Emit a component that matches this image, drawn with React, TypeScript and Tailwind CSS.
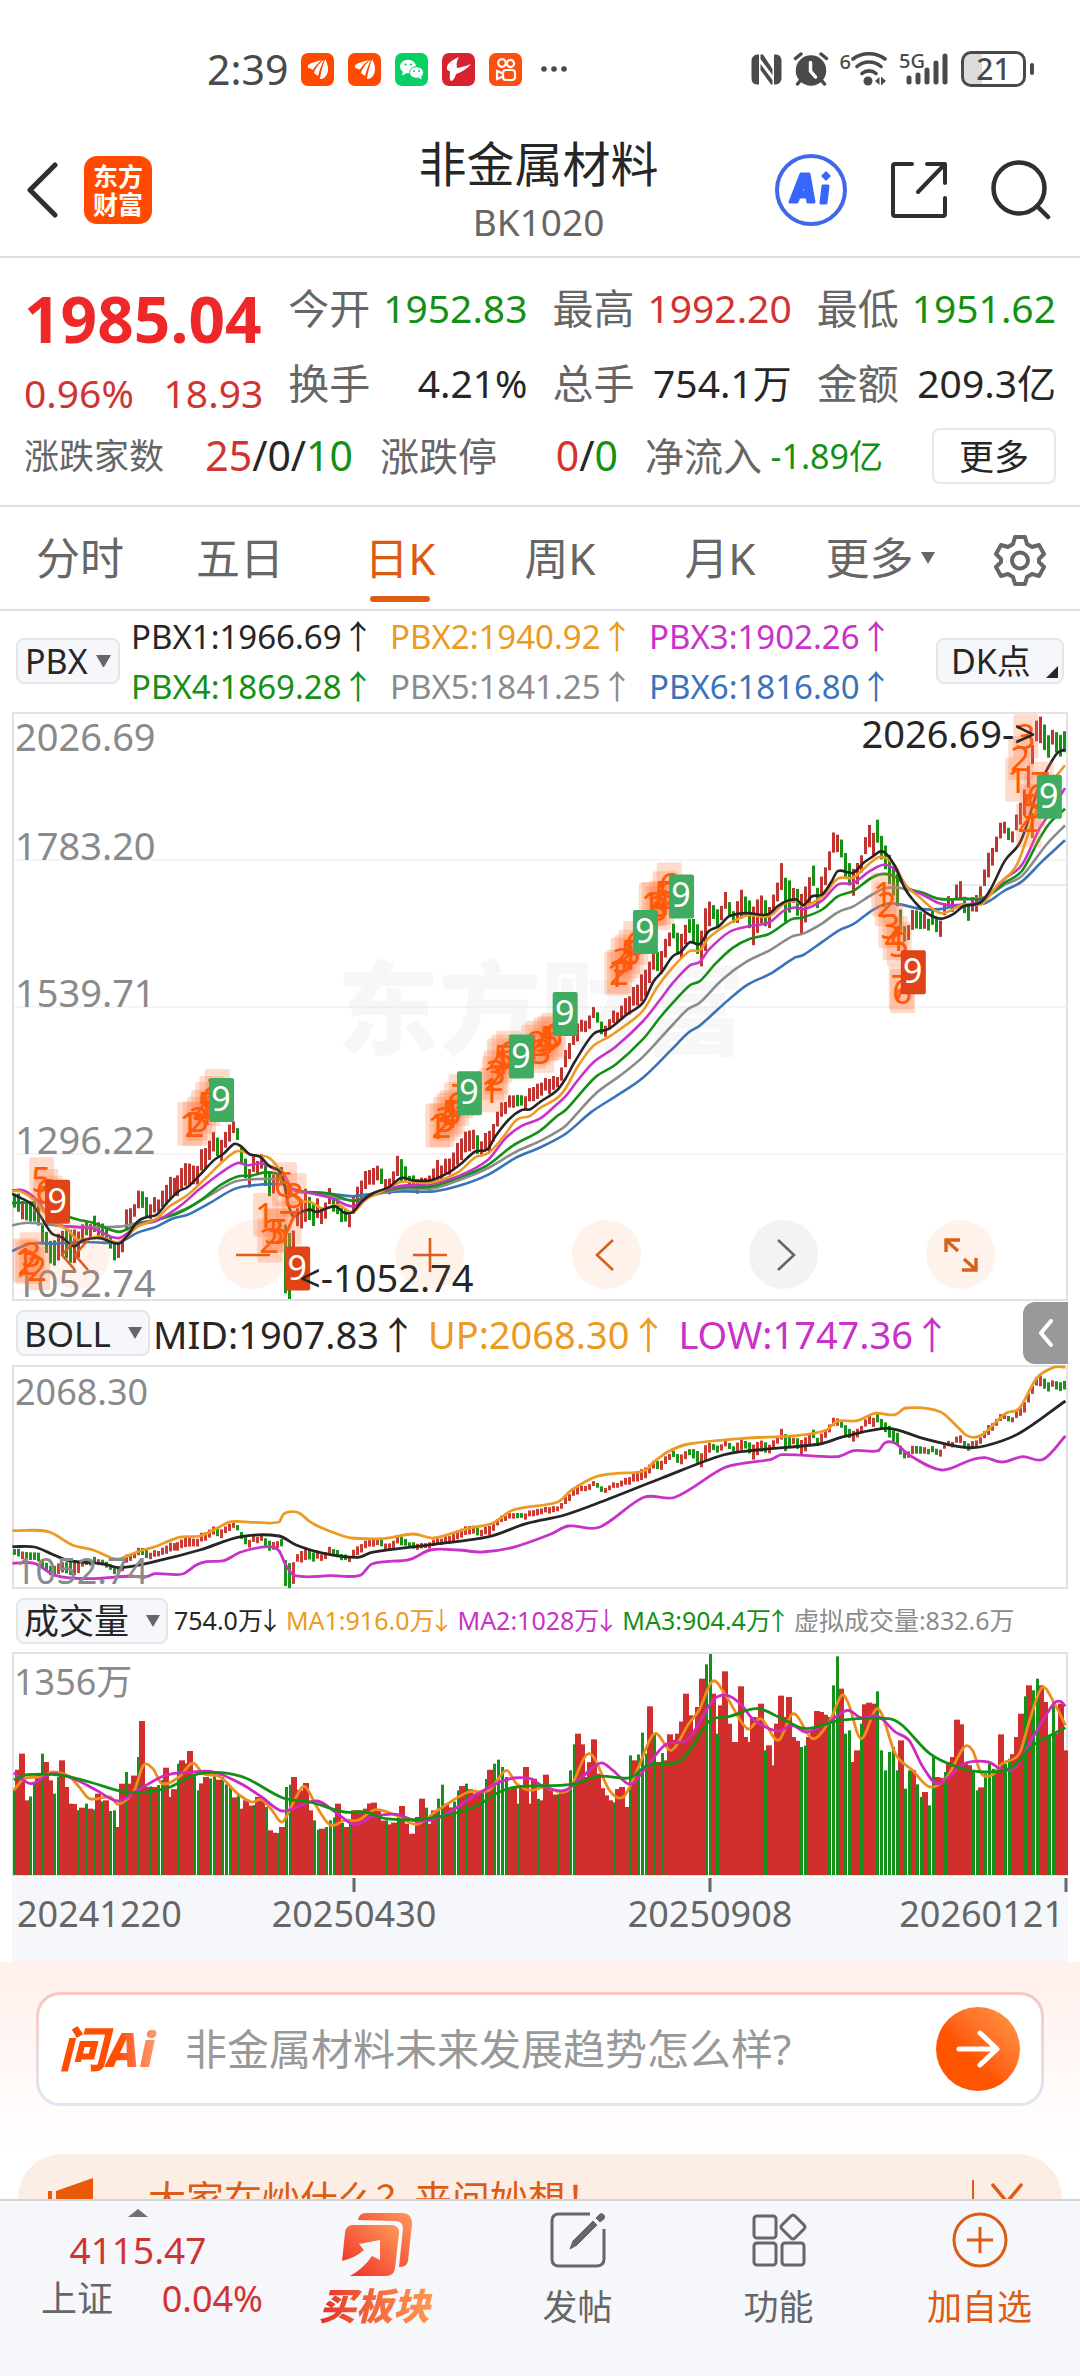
import React from "react";

type Pt = [number, number];

/* ---------- chart helpers ---------- */

const rnd = (i: number) => {
  const v = Math.sin(i * 12.9898 + 4.1) * 43758.5453;
  return v - Math.floor(v);
};

const pairs = (s: string): Pt[] => s.trim().split(/\s+/).map((p) => p.split(",").map(Number) as Pt);

const lerpAt = (list: number[][], x: number, k: number) => {
  if (x <= list[0][0]) return list[0][k];
  for (let i = 1; i < list.length; i++) {
    if (x <= list[i][0]) {
      const a = list[i - 1];
      const b = list[i];
      return a[k] + ((b[k] - a[k]) * (x - a[0])) / (b[0] - a[0]);
    }
  }
  return list[list.length - 1][k];
};

const mx = (x: number) => (x - 35) / 2.904;
const my = (y: number) => (y - 31) / 2.529;
const wx = (x: number) => x / 1.452 - 12;

const curve = (pts: Pt[], fx: (n: number) => number, fy: (n: number) => number) => {
  const p = pts.map(([x, y]) => [fx(x), fy(y)]);
  let d = `M${p[0][0].toFixed(1)} ${p[0][1].toFixed(1)}`;
  for (let i = 0; i < p.length - 1; i++) {
    const a = p[Math.max(0, i - 1)];
    const b = p[i];
    const c = p[i + 1];
    const e = p[Math.min(p.length - 1, i + 2)];
    const step = (c[0] - b[0]) / 3;
    const s1 = i === 0 ? (c[1] - b[1]) / (c[0] - b[0]) : (c[1] - a[1]) / (c[0] - a[0]);
    const s2 = i === p.length - 2 ? (c[1] - b[1]) / (c[0] - b[0]) : (e[1] - b[1]) / (e[0] - b[0]);
    d += `C${(b[0] + step).toFixed(1)} ${(b[1] + s1 * step).toFixed(1)} ${(c[0] - step).toFixed(1)} ${(c[1] - s2 * step).toFixed(1)} ${c[0].toFixed(1)} ${c[1].toFixed(1)}`;
  }
  return d;
};

const RED = "#bf3431";
const GREEN = "#149214";

/* ---------- price data ---------- */

const averages = [
  {
    color: "#3a74b8",
    pts: "35,1397 90,1378 160,1378 250,1374 345,1375 400,1350 455,1335 500,1315 545,1305 610,1275 680,1240 740,1230 815,1228 870,1245 960,1252 1025,1258 1080,1252 1165,1246 1260,1246 1340,1230 1415,1205 1500,1160 1568,1135 1643,1100 1718,1045 1798,1000 1868,958 1953,885 1998,845 2033,826 2098,775 2168,725 2238,695 2308,655 2333,648 2388,615 2438,585 2478,570 2533,535 2578,518 2613,520 2678,532 2731,532 2788,522 2858,518 2918,485 2968,462 3028,410 3093,358",
  },
  {
    color: "#8b8b8b",
    pts: "35,1332 80,1325 200,1335 345,1335 400,1325 455,1318 545,1288 610,1255 680,1222 740,1215 815,1218 850,1240 960,1258 1025,1268 1100,1252 1165,1240 1260,1238 1340,1215 1415,1188 1500,1145 1568,1119 1618,1095 1643,1080 1728,1000 1798,955 1868,905 1953,825 1998,785 2033,768 2098,710 2168,665 2238,635 2298,602 2333,594 2388,568 2433,540 2478,525 2533,495 2568,480 2608,478 2678,492 2731,506 2858,502 2918,470 2968,448 3038,370 3093,320",
  },
  {
    color: "#149014",
    pts: "35,1275 90,1274 130,1275 200,1310 230,1318 270,1325 345,1348 400,1328 455,1318 520,1300 580,1270 640,1230 690,1208 730,1206 770,1198 815,1205 850,1240 960,1252 1025,1270 1080,1254 1165,1236 1250,1234 1320,1215 1415,1180 1490,1130 1568,1093 1618,1055 1643,1040 1728,958 1788,925 1868,860 1918,805 1953,770 2003,725 2033,714 2078,670 2128,630 2178,607 2233,595 2298,558 2333,553 2388,533 2433,500 2478,486 2533,452 2568,443 2603,452 2638,480 2678,490 2731,507 2798,505 2858,505 2918,465 2968,435 3018,355 3048,315 3093,278",
  },
  {
    color: "#c832c8",
    pts: "35,1243 70,1244 110,1270 140,1310 170,1330 220,1336 270,1340 345,1364 400,1332 455,1320 520,1285 580,1240 640,1200 690,1174 720,1180 760,1175 800,1190 820,1195 850,1240 900,1250 960,1262 1025,1284 1060,1262 1100,1248 1165,1232 1250,1228 1330,1208 1415,1168 1470,1110 1515,1080 1568,1062 1618,1025 1643,1005 1678,965 1723,920 1788,880 1868,815 1918,760 1953,720 2003,675 2033,665 2058,635 2118,590 2178,575 2233,566 2278,535 2313,528 2333,533 2388,510 2433,470 2478,466 2528,435 2568,420 2603,435 2638,480 2678,495 2731,518 2778,522 2853,510 2918,455 2968,420 3018,330 3048,290 3093,226",
  },
  {
    color: "#ec9a22",
    pts: "35,1245 60,1246 100,1268 130,1300 160,1325 200,1345 225,1368 290,1360 345,1374 400,1335 455,1315 490,1285 545,1255 600,1210 650,1168 685,1145 710,1146 740,1156 780,1160 815,1195 840,1240 870,1270 900,1272 940,1290 980,1280 1025,1298 1060,1268 1100,1250 1165,1222 1250,1224 1330,1198 1380,1160 1420,1148 1460,1110 1500,1065 1540,1055 1568,1035 1618,1010 1643,985 1678,930 1723,878 1768,855 1818,825 1868,788 1908,730 1953,680 2003,638 2033,636 2058,605 2108,574 2168,548 2233,550 2278,518 2313,512 2333,524 2388,500 2433,455 2478,452 2528,415 2558,400 2598,420 2628,470 2668,500 2731,542 2798,520 2853,518 2898,470 2953,420 2998,310 3028,240 3068,195 3093,168",
  },
  {
    color: "#262626",
    pts: "35,1252 60,1262 95,1280 120,1312 150,1352 180,1362 215,1385 240,1370 290,1364 345,1378 370,1358 400,1322 430,1310 455,1305 490,1270 520,1245 545,1235 580,1205 620,1168 650,1150 680,1126 700,1132 725,1152 755,1158 780,1180 820,1205 835,1270 850,1308 862,1305 880,1296 900,1292 920,1298 945,1290 975,1284 1000,1300 1025,1298 1050,1272 1085,1250 1130,1235 1165,1212 1200,1218 1250,1218 1300,1200 1340,1175 1380,1145 1415,1140 1440,1105 1480,1062 1515,1040 1540,1038 1568,1020 1618,990 1643,960 1668,920 1723,848 1768,835 1818,800 1868,768 1898,715 1923,690 1953,652 1978,640 2003,616 2033,620 2058,588 2088,575 2118,550 2168,542 2228,546 2258,525 2283,512 2313,508 2333,522 2358,500 2388,495 2413,465 2433,436 2478,440 2508,415 2533,400 2558,386 2578,396 2603,430 2628,480 2658,515 2688,540 2731,556 2768,545 2798,525 2848,515 2878,480 2918,410 2958,370 2978,330 3018,220 3068,140 3093,128",
  },
];

const ranges = `38,1250,1295 60,1260,1310 85,1275,1320 110,1290,1345 130,1345,1400 155,1370,1445 180,1345,1415 215,1350,1440 240,1330,1370 270,1320,1360 300,1335,1375 325,1365,1410 350,1380,1420 362,1300,1350 385,1285,1325 402,1237,1285 425,1270,1320 455,1268,1310 485,1210,1265 520,1195,1250 545,1180,1240 575,1170,1220 600,1120,1180 630,1095,1150 645,1110,1165 665,1085,1130 680,1072,1100 700,1115,1160 720,1190,1245 740,1160,1200 765,1150,1195 780,1200,1270 800,1195,1240 818,1180,1230 828,1330,1510 851,1360,1520 863,1290,1340 880,1240,1335 905,1270,1330 935,1275,1320 960,1245,1290 985,1270,1310 1015,1300,1340 1038,1230,1290 1065,1200,1240 1095,1175,1220 1125,1210,1250 1163,1152,1215 1180,1195,1240 1210,1215,1250 1250,1205,1240 1270,1180,1230 1300,1160,1200 1335,1120,1180 1370,1090,1145 1400,1115,1160 1425,1085,1145 1445,1035,1075 1490,990,1030 1520,1010,1045 1555,980,1020 1583,960,1000 1618,955,985 1648,880,930 1673,825,870 1698,815,850 1723,780,810 1753,820,855 1778,800,830 1808,765,810 1838,740,790 1868,690,765 1893,640,690 1918,630,690 1948,570,610 1973,600,670 1998,560,600 2033,580,675 2050,520,640 2063,505,545 2083,540,590 2103,495,535 2128,530,570 2153,480,560 2165,520,560 2186,525,630 2208,510,580 2233,530,590 2258,450,500 2268,410,490 2280,465,585 2303,475,510 2326,490,600 2358,420,480 2373,480,535 2398,415,460 2420,345,400 2438,355,400 2458,405,470 2478,440,510 2503,390,430 2523,310,370 2536,340,400 2548,300,370 2558,345,400 2580,400,480 2603,450,530 2616,545,610 2630,590,630 2648,540,590 2678,545,590 2708,540,580 2731,560,612 2743,515,550 2768,510,540 2783,465,510 2813,510,560 2843,490,530 2868,400,460 2908,300,340 2943,325,360 2973,230,300 2998,130,180 3013,40,100 3024,36,110 3046,100,160 3060,70,115 3080,90,150 3093,95,150`
  .split(" ")
  .map((p) => p.split(",").map(Number));

const COUNT = 264;
const candles = Array.from({ length: COUNT }, (_, i) => {
  const x = 40 + i * 11.6;
  const off = (rnd(i) - 0.5) * 22;
  const hi = Math.max(36, lerpAt(ranges, x, 1) + off + rnd(i + 500) * 10 - 4);
  const lo = Math.min(1522, Math.max(hi + 26, lerpAt(ranges, x, 2) + off - rnd(i + 900) * 8));
  const slope = lerpAt(ranges, x + 11, 1) - lerpAt(ranges, x - 11, 1);
  return { x, hi, lo, up: rnd(i + 77) * 60 - 30 + slope * 1.4 < 6 };
});

type Mark = [number, number, string];
const turns: Mark[] = [
  [120, 1215, "5"], [132, 1245, "6"], [145, 1262, "7"],
  [72, 1420, "1"], [80, 1425, "2"], [92, 1405, "3"], [108, 1440, "2"],
  [550, 1075, "1"], [565, 1075, "2"], [578, 1062, "3"], [590, 1045, "4"], [602, 1025, "5"], [614, 1010, "6"], [630, 992, "7"],
  [770, 1305, "1"], [782, 1370, "2"], [797, 1345, "3"], [810, 1345, "5"], [838, 1325, "7"], [825, 1228, "6"], [853, 1255, "8"],
  [1270, 1080, "1"], [1282, 1078, "2"], [1293, 1062, "3"], [1303, 1052, "4"], [1312, 1045, "5"], [1325, 1025, "6"], [1338, 1005, "7"],
  [1426, 990, "1"], [1434, 960, "2"], [1440, 945, "3"], [1450, 915, "4"], [1462, 905, "5"], [1476, 895, "6"],
  [1548, 880, "1"], [1560, 870, "2"], [1572, 890, "3"], [1584, 862, "4"], [1596, 858, "5"], [1606, 850, "6"],
  [1790, 695, "1"], [1798, 690, "2"], [1808, 660, "3"], [1820, 652, "4"], [1832, 640, "5"], [1845, 618, "6"],
  [1890, 520, "1"], [1900, 520, "2"], [1910, 530, "3"], [1920, 515, "4"], [1930, 492, "5"], [1942, 470, "6"],
  [2565, 495, "1"], [2575, 520, "2"], [2586, 575, "3"], [2598, 605, "4"], [2610, 620, "5"], [2616, 730, "7"], [2620, 740, "6"],
  [2954, 205, "1"], [2963, 150, "2"], [2978, 95, "3"], [2986, 320, "4"], [2998, 272, "5"], [3010, 245, "6"], [3022, 215, "7"],
];
const nines: [number, number, string][] = [
  [166, 1272, "#e04416"], [642, 1015, "#40ac62"], [863, 1441, "#e04416"], [1362, 998, "#40ac62"], [1513, 905, "#40ac62"],
  [1640, 797, "#40ac62"], [1873, 590, "#40ac62"], [1978, 500, "#40ac62"], [2651, 692, "#e04416"], [3046, 248, "#40ac62"],
];

const FONT = "'Noto Sans','Noto Sans CJK SC',sans-serif";

function PriceChart() {
  return (
    <svg viewBox="0 0 1056 590" className="block w-full" role="img" aria-label="日K" fontFamily={FONT}>
      <text x="325" y="336" fontSize="102" fontWeight="900" fill="#f7f7f7" fontFamily="'Noto Sans CJK SC',sans-serif">
        东方财富
      </text>
      {[149, 296, 443].map((y) => (
        <line key={y} x1="0" x2="1056" y1={y} y2={y} stroke="#d8d8d8" strokeDasharray="1 1" />
      ))}
      <line x1="940" x2="1056" y1="174" y2="174" stroke="#d8d8d8" />
      <rect x="1" y="2" width="1054" height="587" fill="none" stroke="#e2e2e2" strokeWidth="2" />
      <g fontSize="38" fill="#8a8a8a">
        <text x="3" y="40">2026.69</text>
        <text x="3" y="149">1783.20</text>
        <text x="3" y="296">1539.71</text>
        <text x="3" y="443">1296.22</text>
        <text x="3" y="586">1052.74</text>
      </g>
      {candles.map((c, i) => (
        <rect key={i} x={Math.round(mx(c.x)) - 1} y={my(c.hi)} width="3" height={(c.lo - c.hi) / 2.529} fill={c.up ? RED : GREEN} />
      ))}
      {averages.map((a) => (
        <path key={a.color} d={curve(pairs(a.pts), mx, my)} fill="none" stroke={a.color} strokeWidth="2.6" strokeLinejoin="round" />
      ))}
      {turns.map(([x, y], i) => (
        <rect key={i} x={mx(x) - 12} y={my(y) - 22} width="25" height="44" rx="2" fill="#ff7a40" fillOpacity="0.27" />
      ))}
      <g fontSize="35" fill="#ff5a0a" textAnchor="middle">
        {turns.map(([x, y, d], i) => (
          <text key={i} x={mx(x)} y={my(y) + 13}>{d}</text>
        ))}
      </g>
      {nines.map(([x, y, c], i) => (
        <g key={i}>
          <rect x={mx(x) - 12} y={my(y) - 22} width="25" height="44" rx="2" fill={c} />
          <text x={mx(x)} y={my(y) + 11} fontSize="34" fill="#fff" textAnchor="middle">9</text>
        </g>
      ))}
      <g fontSize="38" fill="#262626">
        <text x="287" y="581">&lt;-1052.74</text>
        <text x="1024" y="37" textAnchor="end">2026.69-&gt;</text>
      </g>
    </svg>
  );
}

const bands = [
  { color: "#ec9a22", pts: "18,722 70,725 105,765 135,780 165,806 175,806 200,785 225,770 260,742 290,738 315,715 335,695 370,697 405,696 412,672 425,665 435,670 450,695 465,712 490,732 510,744 560,745 600,732 630,744 680,715 715,700 745,660 810,636 830,600 865,560 895,550 935,543 950,515 970,485 1000,462 1080,445 1160,436 1200,420 1215,394 1245,392 1270,370 1300,374 1315,354 1365,365 1390,410 1405,438 1425,436 1460,370 1480,355 1505,265 1530,232 1547,231" },
  { color: "#c832c8", pts: "18,820 50,820 80,856 130,866 190,858 210,862 225,851 265,852 285,825 300,815 325,812 350,786 390,770 405,782 415,825 428,857 480,857 523,856 540,822 595,808 625,780 665,780 700,786 745,772 800,732 825,708 870,712 935,622 980,622 1050,535 1085,518 1120,508 1135,494 1215,500 1240,482 1275,482 1285,458 1300,460 1320,495 1367,540 1410,510 1430,503 1455,516 1485,500 1515,508 1547,438" },
  { color: "#262626", pts: "18,770 50,771 75,792 100,812 150,822 175,833 230,812 290,780 350,740 405,738 430,765 470,790 520,802 540,787 630,763 710,740 765,700 820,675 880,630 960,565 1050,495 1100,480 1190,462 1225,440 1290,415 1340,445 1400,472 1430,468 1480,430 1547,333" },
];

const bandY = (y: number) => (y - 228) / 3 + 1;
const priceToBand = (y: number) => bandY(228 + (2068.3 - (2026.69 - (y - 35) * 0.655)) * 0.6578);

function BollChart() {
  return (
    <svg viewBox="0 0 1056 224" className="block w-full" role="img" aria-label="BOLL" fontFamily={FONT}>
      <rect x="1" y="1" width="1054" height="222" fill="none" stroke="#e2e2e2" strokeWidth="2" />
      {candles.map((c, i) => (
        <rect key={i} x={Math.round(mx(c.x)) - 1} y={priceToBand(c.hi) - 1} width="3" height={priceToBand(c.lo) - priceToBand(c.hi) + 1} fill={c.up ? "#cc3c36" : "#1a941a"} />
      ))}
      {bands.map((b) => (
        <path key={b.color} d={curve(pairs(b.pts), wx, bandY)} fill="none" stroke={b.color} strokeWidth="2.8" strokeLinejoin="round" />
      ))}
      <g fontSize="36" fill="#8a8a8a">
        <text x="3" y="40">2068.30</text>
        <text x="3" y="219">1052.74</text>
      </g>
    </svg>
  );
}

const volumeTops = pairs(
  "20,600 30,490 40,630 50,575 60,490 66,515 72,570 80,610 90,510 98,590 105,640 125,640 132,655 145,610 157,630 165,660 170,710 175,580 182,545 190,580 200,500 206,392 211,590 225,590 240,532 250,620 257,520 266,510 275,482 288,600 300,560 310,545 320,560 335,590 345,615 350,655 358,630 378,625 385,650 395,720 410,710 418,590 426,560 436,600 444,578 450,660 456,690 462,718 470,715 480,690 490,640 500,710 515,660 530,655 543,637 560,690 575,680 583,647 590,700 600,730 606,680 612,625 618,652 624,700 635,625 641,583 650,640 670,587 678,580 690,610 700,600 706,566 715,520 722,508 728,530 735,560 745,590 752,640 763,530 769,640 775,565 785,630 792,553 800,600 820,600 827,540 832,462 838,430 845,462 852,560 862,447 870,550 878,615 885,630 900,590 908,650 914,495 922,510 931,427 937,490 943,348 950,430 956,515 962,488 968,510 972,432 985,430 995,310 1001,375 1007,420 1013,350 1018,265 1024,222 1030,190 1036,310 1042,430 1048,345 1053,243 1060,400 1066,455 1072,455 1076,288 1082,440 1088,455 1095,380 1105,340 1111,480 1117,465 1124,525 1130,400 1135,316 1141,380 1147,320 1153,440 1163,470 1175,440 1188,362 1194,365 1203,380 1209,285 1215,198 1222,295 1228,430 1234,420 1239,515 1245,480 1250,400 1256,342 1268,340 1274,303 1280,480 1286,540 1291,485 1297,470 1304,540 1309,450 1315,595 1321,540 1327,540 1337,620 1344,605 1350,645 1354,497 1362,560 1372,545 1378,515 1383,500 1390,388 1397,402 1402,520 1412,540 1420,600 1430,550 1437,520 1448,540 1454,432 1460,520 1468,505 1476,440 1482,370 1488,318 1495,285 1500,300 1506,265 1512,285 1518,335 1524,435 1530,335 1536,430 1541,340 1547,480",
);
const volumeLines = [
  { color: "#ec8e1c", pts: "20,600 35,565 60,560 75,545 100,558 115,590 130,625 160,620 172,642 195,600 208,525 222,535 235,580 260,560 280,518 295,550 320,560 345,610 365,635 380,628 395,660 410,695 425,640 442,588 460,650 480,705 500,690 520,690 545,658 575,675 605,702 635,660 680,605 710,600 735,540 750,580 770,600 790,590 825,600 850,497 862,500 885,600 905,620 925,540 950,430 975,480 1000,400 1015,360 1035,272 1055,320 1085,415 1105,385 1130,450 1152,370 1180,445 1205,390 1222,315 1232,340 1250,445 1275,355 1300,490 1325,540 1350,590 1375,560 1400,470 1412,480 1425,550 1440,555 1455,520 1480,490 1495,390 1513,292 1530,335 1547,405" },
  { color: "#d028c0", pts: "20,548 45,580 75,550 110,568 140,600 172,632 200,600 240,555 280,545 310,545 350,580 380,620 410,662 460,632 490,670 515,703 540,680 575,672 605,692 640,680 690,615 735,568 770,565 790,590 820,600 845,560 872,518 890,540 915,582 935,540 965,465 1000,445 1035,330 1055,315 1075,340 1095,390 1130,422 1150,405 1170,425 1200,400 1230,360 1250,382 1275,378 1300,425 1320,450 1340,530 1362,580 1400,520 1435,515 1455,538 1475,530 1500,440 1530,340 1540,333 1547,348" },
  { color: "#149014", pts: "20,568 40,553 90,555 130,575 185,606 240,595 290,550 350,558 410,622 450,635 500,665 530,665 560,685 620,685 690,650 720,610 750,590 830,582 870,558 915,562 940,525 985,515 1005,470 1030,392 1060,378 1100,355 1140,390 1170,415 1220,390 1290,385 1310,405 1350,490 1390,530 1430,545 1470,530 1500,465 1547,412" },
];
const volY = (y: number) => (y - 188) / 3 + 1;

const bars = Array.from({ length: COUNT }, (_, i) => {
  const x = 21 + i * 5.8;
  const near = volumeTops.filter((p) => Math.abs(p[0] - x) <= 2.9).map((p) => p[1]);
  const top = near.length ? Math.min(...near) : lerpAt(volumeTops, x, 1) + rnd(i + 300) * 30 - 6;
  return { x: Math.round(wx(x)), y: Math.max(2, volY(top)), up: rnd(i + 41) < (x > 1280 && x < 1345 ? 0.25 : 0.62) };
});

function VolumeChart() {
  return (
    <svg viewBox="0 0 1056 224" className="block w-full" role="img" aria-label="成交量" fontFamily={FONT}>
      <rect x="1" y="1" width="1054" height="222" fill="none" stroke="#e2e2e2" strokeWidth="2" />
      {bars.map((b, i) => b.up && <rect key={i} x={b.x - 3} y={b.y} width="6" height={223 - b.y} fill="#d02f2d" />)}
      {bars.map((b, i) => !b.up && <rect key={i} x={b.x - 1} y={b.y} width="3" height={223 - b.y} fill="#16901a" />)}
      {volumeLines.map((b) => (
        <path key={b.color} d={curve(pairs(b.pts), wx, volY)} fill="none" stroke={b.color} strokeWidth="2.8" strokeLinejoin="round" />
      ))}
      <text x="2" y="43" fontSize="36" fill="#8a8a8a">1356万</text>
    </svg>
  );
}

/* ---------- status bar ---------- */

const Feather = () => (
  <svg viewBox="0 0 33 33" className="size-[33px]">
    <rect width="33" height="33" rx="7" fill="#ff4a00" />
    <g fill="#fff">
      <path d="M7 12C12 9 17 8 22 7C17 10 14 13 12 17C11 16 9 15 7 15Z" />
      <path d="M13 20C15 14 19 9 24 6C21 12 18 18 17 23C16 22 14 21 13 20Z" />
      <path d="M19 26C20 18 22 12 24 6C27 11 28 17 26 21C25 24 22 26 19 26Z" />
    </g>
    <path d="M12 17.5C15 12 19 8.500 24 6M18 24C19 17 21 11 24 6" stroke="#ff4a00" fill="none" />
  </svg>
);

function StatusBar() {
  return (
    <div className="flex h-[92px] items-end pr-[46px] pl-[207px] text-[#4a4a4a]">
      <div className="flex h-[46px] flex-1 items-center gap-[14px]">
        <span className="w-20 text-[41px] leading-none whitespace-nowrap">2:39</span>
        <Feather />
        <Feather />
        <svg viewBox="0 0 33 33" className="size-[33px]">
          <rect width="33" height="33" rx="7" fill="#08d065" />
          <g fill="#fff">
            <ellipse cx="13" cy="13.500" rx="8" ry="6.800" />
            <path d="M8 18L7 22.500L12 20Z" />
            <ellipse cx="21.500" cy="19.500" rx="7" ry="5.800" stroke="#08d065" />
            <path d="M23 24L26.500 26.500L26 22Z" />
          </g>
          <g fill="#08d065">
            <circle cx="10.500" cy="11.500" r="1.100" />
            <circle cx="16" cy="11.500" r="1.100" />
            <circle cx="19" cy="18" r="1" />
            <circle cx="24" cy="18" r="1" />
          </g>
        </svg>
        <svg viewBox="0 0 33 33" className="size-[33px]">
          <rect width="33" height="33" rx="7" fill="#d8232f" />
          <path d="M17 4C8 8 4 12 5 16C5.500 18 8 17.500 8 19C8 23 7 26 9 28C11 28 13 25 14 21C20 19 26 15 29 11C24 13 19 14.500 15 15C14 11 15 7 17 4Z" fill="#fff" />
        </svg>
        <svg viewBox="0 0 33 33" className="size-[33px]">
          <rect width="33" height="33" rx="7" fill="#fb500f" />
          <g fill="none" stroke="#fff" strokeWidth="2.200">
            <circle cx="13" cy="10" r="3.800" />
            <circle cx="21.500" cy="10.500" r="3.600" />
            <rect x="14" y="17" width="12" height="10" rx="3" />
            <path d="M14 20.500L8 18V26L14 23.500" />
          </g>
        </svg>
        <svg viewBox="0 0 28 8" className="ml-1 w-7">
          <g fill="#4a4a4a">
            <circle cx="4" cy="4" r="2.800" />
            <circle cx="14" cy="4" r="2.800" />
            <circle cx="24" cy="4" r="2.800" />
          </g>
        </svg>
      </div>
      <div className="flex h-[46px] items-center gap-[11px]">
        <svg viewBox="0 0 31 33" className="w-[31px]" fill="#4a4a4a">
          <path d="M8 1.500H6Q0.500 2.500 0.500 8V25Q0.500 31 6 31.500H8Z" />
          <path d="M23 31.500H25Q30.500 30.500 30.500 25V8Q30.500 2 25 1.500H23Z" />
          <path d="M9.500 1.500H12L21.500 16V22L9.500 6Z" />
          <path d="M9.500 11L21.500 27V31.500H20L9.500 17Z" />
        </svg>
        <svg viewBox="0 0 36 34" className="w-9" fill="none" stroke="#4a4a4a" strokeWidth="3.500" strokeLinecap="round">
          <circle cx="18" cy="18.500" r="13.500" fill="#4a4a4a" />
          <path d="M2.500 6.500L8 2M33.500 6.500L28 2M7 29L4.500 32M29 29L31.500 32" />
          <path d="M17.500 10.500V19L22.500 25" stroke="#fff" />
        </svg>
        <div className="flex">
          <span className="text-xl leading-5 font-medium">6</span>
          <svg viewBox="0 0 37 34" className="w-[37px]" fill="none" stroke="#4a4a4a" strokeWidth="3.600" strokeLinecap="round">
            <path d="M2 7C11 0 25 0 34 7M6 14.500C13 8.500 23 8.500 30 14.500M11 21.500C15 18 21 18 25 21.500" />
            <circle cx="17" cy="29" r="4.500" fill="#4a4a4a" stroke="none" />
            <path d="M24 29L28.500 25V33ZM30 24.500V33.500L35 29Z" fill="#4a4a4a" stroke="none" />
          </svg>
        </div>
        <div className="relative mr-[1px] w-[50px]">
          <svg viewBox="0 0 50 34" className="w-full" stroke="#4a4a4a" strokeWidth="5" strokeLinecap="round">
            <path d="M10 26V30M19 23V30M28 18V30M37 11V30M46 4V30" />
          </svg>
          <span className="absolute -top-[3px] left-0 text-xl leading-6 font-medium">5G</span>
        </div>
        <div className="flex items-center">
          <div className="flex h-9 w-[65px] items-center justify-center rounded-[10px] border-[3px] border-[#4a4a4a] bg-linear-to-r from-[#dcdcdc] from-30% to-white to-30% text-[30px] leading-none font-medium">
            21
          </div>
          <div className="ml-1 h-3 w-1 rounded-sm bg-[#4a4a4a]" />
        </div>
      </div>
    </div>
  );
}

/* ---------- header ---------- */

function Header() {
  return (
    <header className="flex h-[166px] items-center border-b-2 border-[#dedede] pt-8 pr-[29px] pl-[26px]">
      <div className="flex flex-1 items-center gap-[26px]">
        <button aria-label="返回">
          <svg viewBox="0 0 32 56" className="w-8" fill="none" stroke="#2f2f2f" strokeWidth="5" strokeLinecap="round" strokeLinejoin="round">
            <path d="M29 3L4 28L29 53" />
          </svg>
        </button>
        <a href="#home" className="flex size-[68px] flex-col items-center justify-center rounded-[13px] bg-[#ff4a00] text-[25px] leading-7 font-bold text-white">
          <span>东方</span>
          <span>财富</span>
        </a>
      </div>
      <div className="pt-1 text-center">
        <h1 className="text-[48px] leading-[60px] text-[#262626]">非金属材料</h1>
        <p className="text-[37px] leading-[56px] text-[#666]">BK1020</p>
      </div>
      <div className="flex flex-1 items-center justify-end gap-[43px]">
        <button aria-label="Ai">
          <svg viewBox="0 0 72 72" className="w-[72px]">
            <circle cx="36" cy="36" r="34" fill="none" stroke="#4068e8" strokeWidth="4" />
            <g fill="#3866fa" stroke="#3866fa" strokeWidth="3" strokeLinejoin="round">
              <path fillRule="evenodd" d="M26 20H34L39 48H33L32 43H24L22 48H15ZM29 29L26 38H31Z" />
              <path d="M48 32H53L51 49H46Z" />
              <path d="M51 18L55 22L51 26L47 22Z" strokeWidth="1.500" />
            </g>
          </svg>
        </button>
        <button aria-label="分享">
          <svg viewBox="0 0 58 58" className="w-[58px]" fill="none" stroke="#2f2f2f" strokeWidth="4" strokeLinecap="round" strokeLinejoin="round">
            <path d="M22 3H5Q3 3 3 5V53Q3 55 5 55H53Q55 55 55 53V37M37 3H55V22M54 4L28 31" />
          </svg>
        </button>
        <button aria-label="搜索">
          <svg viewBox="0 0 60 60" className="w-[60px]" fill="none" stroke="#2f2f2f" strokeWidth="4.500" strokeLinecap="round">
            <circle cx="28" cy="28" r="25.500" />
            <path d="M46 46L57 57" />
          </svg>
        </button>
      </div>
    </header>
  );
}

/* ---------- quote summary ---------- */

const stats = [
  ["今开", "1952.83", "text-[#149014]"],
  ["最高", "1992.20", "text-[#d03432]"],
  ["最低", "1951.62", "text-[#149014]"],
  ["换手", "4.21%", "text-[#262626]"],
  ["总手", "754.1万", "text-[#262626]"],
  ["金额", "209.3亿", "text-[#262626]"],
];

function Quote() {
  return (
    <section className="border-b-2 border-[#dedede] px-6 pt-[13px] pb-[14px] text-[#262626]">
      <div className="grid grid-cols-4 gap-x-[25px]">
        <div className="row-span-2 pt-4 whitespace-nowrap text-[#d03432]">
          <div className="text-[64px] leading-[64px] font-bold text-[#ee2828]">1985.04</div>
          <div className="mt-[14px] flex justify-between text-[39px] leading-[56px]">
            <span>0.96%</span>
            <span>18.93</span>
          </div>
        </div>
        {stats.map(([label, value, tone]) => (
          <div key={label} className="flex h-[75px] items-center justify-between whitespace-nowrap">
            <span className="text-[41px] text-[#666]">{label}</span>
            <span className={`text-[39px] ${tone}`}>{value}</span>
          </div>
        ))}
      </div>
      <div className="grid h-[70px] grid-cols-[329fr_238fr_238fr_146fr] items-center gap-x-[27px] text-[41px] whitespace-nowrap">
        <div className="flex items-center justify-between">
          <span className="text-[35px] text-[#666]">涨跌家数</span>
          <span>
            <span className="text-[#d03432]">25</span>/0/<span className="text-[#149014]">10</span>
          </span>
        </div>
        <div className="flex items-center justify-between">
          <span className="text-[39px] text-[#666]">涨跌停</span>
          <span>
            <span className="text-[#d03432]">0</span>/<span className="text-[#149014]">0</span>
          </span>
        </div>
        <div className="flex items-center justify-between">
          <span className="text-[39px] text-[#666]">净流入</span>
          <span className="text-[34px] text-[#149014]">-1.89亿</span>
        </div>
        <button className="ml-auto h-[56px] w-[124px] rounded-lg border-2 border-[#e6e6e6] text-[35px] leading-none">更多</button>
      </div>
    </section>
  );
}

const Down = ({ className = "w-[14px]" }: { className?: string }) => (
  <svg viewBox="0 0 14 12" className={className} fill="#666">
    <path d="M0 0H14L7 12Z" />
  </svg>
);

function Tabs() {
  return (
    <nav className="flex h-[104px] items-center border-b-2 border-[#dedede] pt-1 text-[44px] text-[#666]">
      {["分时", "五日", "日K", "周K", "月K", "更多"].map((t) => (
        <button
          key={t}
          className={`relative flex h-full flex-[160] items-center justify-center gap-[7px] pb-1 ${t === "日K" ? "text-[#dc5c14]" : ""}`}
        >
          {t}
          {t === "更多" && <Down />}
          {t === "日K" && <span className="absolute bottom-[7px] left-1/2 h-[6px] w-[60px] -translate-x-1/2 rounded-full bg-[#dc5c14]" />}
        </button>
      ))}
      <button aria-label="设置" className="flex flex-[120] justify-center">
        <svg viewBox="0 0 52 52" className="w-[52px]" fill="none" stroke="#666" strokeWidth="4" strokeLinejoin="round">
          <path d="M21 3H31L33 10L38 13L45 11L50 20L45 25V28L50 33L45 42L38 40L33 43L31 50H21L19 43L14 40L7 42L2 33L7 28V25L2 20L7 11L14 13L19 10Z" />
          <circle cx="26" cy="26.500" r="8" />
        </svg>
      </button>
    </nav>
  );
}

/* ---------- indicator rows ---------- */

const Arrow = ({ children }: { children: string }) => (
  <span className="inline-flex w-[1em] justify-center font-['Noto_Sans_CJK_SC',sans-serif]">{children}</span>
);

const SlimArrow = ({ children }: { children: string }) => (
  <span className="inline-flex w-[14px] justify-center font-['Noto_Sans_CJK_SC',sans-serif]">{children}</span>
);

const chip = "flex h-[46px] shrink-0 items-center rounded-lg border-2 border-[#e4e5e8] bg-[#f6f7fa] text-[#262626] leading-none whitespace-nowrap";

const pbx = [
  ["PBX1:1966.69", "text-[#262626]"],
  ["PBX2:1940.92", "text-[#ec9a22]"],
  ["PBX3:1902.26", "text-[#c832c8]"],
  ["PBX4:1869.28", "text-[#149014]"],
  ["PBX5:1841.25", "text-[#8b8b8b]"],
  ["PBX6:1816.80", "text-[#3a74b8]"],
];

const round = "flex size-[69px] items-center justify-center rounded-full";

function Charts() {
  return (
    <section>
      <div className="flex h-[100px] items-center pr-4 pl-4">
        <button className={`${chip} w-[104px] justify-between px-[7px] text-[34px]`}>
          PBX <Down className="w-[15px]" />
        </button>
        <div className="ml-[11px] grid w-[777px] grid-cols-3 text-[33px] leading-[48px] whitespace-nowrap">
          {pbx.map(([t, tone]) => (
            <span key={t} className={tone}>
              {t}
              <Arrow>↑</Arrow>
            </span>
          ))}
        </div>
        <button className={`${chip} relative ml-auto w-[128px] px-[13px] text-[34px]`}>
          DK点
          <svg viewBox="0 0 12 12" className="absolute right-1 bottom-1 w-3" fill="#262626">
            <path d="M12 0V12H0Z" />
          </svg>
        </button>
      </div>

      <div className="relative mx-3">
        <PriceChart />
        <div className="absolute inset-x-0 bottom-[12px] flex justify-between pr-[73px] pl-[29px] text-[#d8601c]">
          {["最左", "缩小", "放大", "左移", "右移", "全屏"].map((n, i) => (
            <button key={n} aria-label={n} className={`${round} ${i === 4 ? "bg-[#f3f3f3] text-[#666]" : "bg-[#ff7a30]/10"}`}>
              <svg viewBox="0 0 36 36" className="w-9" fill="none" stroke="currentColor" strokeWidth="2.600">
                {i === 0 && <path d="M17 3L4 18L17 33M30 3L17 18L30 33" />}
                {i === 1 && <path d="M1 18H35" />}
                {i === 2 && <path d="M1 18H35M18 1V35" />}
                {i === 3 && <path d="M24 3L8 18L24 33" />}
                {i === 4 && <path d="M12 3L28 18L12 33" />}
                {i === 5 && <path d="M3 15V3H17M4 4L15 14M33 21V33H19M32 32L21 22" strokeWidth="3.400" />}
              </svg>
            </button>
          ))}
        </div>
      </div>

      <div className="mr-3 flex h-16 items-center gap-[3px] pl-4 text-[38px] whitespace-nowrap">
        <button className={`${chip} w-[134px] justify-between px-[6px] text-[35px]`}>
          BOLL <Down />
        </button>
        <span className="text-[#262626]">MID:1907.83<Arrow>↑</Arrow></span>
        <span className="ml-2 text-[#ec9a22]">UP:2068.30<Arrow>↑</Arrow></span>
        <span className="ml-2 text-[#c832c8]">LOW:1747.36<Arrow>↑</Arrow></span>
        <button aria-label="收起" className="ml-auto flex h-[62px] w-[45px] items-center justify-center rounded-l-[12px] bg-[#999]">
          <svg viewBox="0 0 16 28" className="w-4" fill="none" stroke="#fff" strokeWidth="4" strokeLinecap="round" strokeLinejoin="round">
            <path d="M13 2L3 14L13 26" />
          </svg>
        </button>
      </div>
      <div className="mx-3">
        <BollChart />
      </div>

      <div className="flex h-[63px] items-center gap-[9px] pl-4 text-[25px] whitespace-nowrap">
        <button className={`${chip} -mr-[3px] w-[152px] justify-between px-[6px] text-[35px]`}>
          成交量 <Down />
        </button>
        <span className="text-[#262626]">754.0万<SlimArrow>↓</SlimArrow></span>
        <span className="text-[#ec9a22]">MA1:916.0万<SlimArrow>↓</SlimArrow></span>
        <span className="text-[#c832c8]">MA2:1028万<SlimArrow>↓</SlimArrow></span>
        <span className="text-[#149014]">MA3:904.4万<SlimArrow>↑</SlimArrow></span>
        <span className="text-[#8b8b8b]">虚拟成交量:832.6万</span>
      </div>
      <div className="mx-3">
        <VolumeChart />
        <div className="h-[86px] border-t-2 border-white bg-[#f6f7fa]">
          <svg viewBox="0 0 1056 84" className="block w-full" fontFamily={FONT}>
            <path d="M342 0V14M698 0V14M1054 0V14" stroke="#666" strokeWidth="3" />
            <g fontSize="36" fill="#666">
              <text x="5" y="49">20241220</text>
              <text x="342" y="49" textAnchor="middle">20250430</text>
              <text x="698" y="49" textAnchor="middle">20250908</text>
              <text x="1052" y="49" textAnchor="end">20260121</text>
            </g>
          </svg>
        </div>
      </div>
    </section>
  );
}

/* ---------- ask + banner ---------- */

function Ask() {
  return (
    <section className="bg-linear-to-b from-[#fff0ec] to-white px-9 pt-[30px] pb-12">
      <div className="rounded-3xl bg-linear-to-b from-[#f4c9c0] to-[#dfe6f3] p-[3px]">
        <form className="flex h-[108px] items-center rounded-[21px] bg-white pr-[21px] pl-5">
          <label
            htmlFor="ask"
            className="w-[102px] bg-linear-to-r from-[#ff4e00] from-60% to-[#ffa078] bg-clip-text text-[48px] leading-[60px] font-black whitespace-nowrap text-transparent italic"
          >
            问Ai
          </label>
          <input
            id="ask"
            placeholder="非金属材料未来发展趋势怎么样?"
            className="ml-6 min-w-0 flex-1 text-[42px] leading-[60px] outline-none placeholder:text-[#999]"
          />
          <button type="button" aria-label="发送" className="flex size-[84px] items-center justify-center rounded-full bg-linear-to-bl from-[#ff9a48] to-[#ff5500] to-60%">
            <svg viewBox="0 0 44 40" className="w-11" fill="none" stroke="#fff" strokeWidth="5" strokeLinecap="round" strokeLinejoin="round">
              <path d="M3 20H40M24 4L41 20L24 36" />
            </svg>
          </button>
        </form>
      </div>
    </section>
  );
}

function Banner() {
  return (
    <div className="mx-[18px] flex h-[88px] items-center rounded-[44px] bg-[#fceee5] pr-[38px] pl-[30px] text-[#dc5c14]">
      <svg viewBox="0 0 46 40" className="w-[46px]" fill="#e85a08">
        <path d="M0 13H4V30H0ZM8 13L45 0V40L8 30Z" />
      </svg>
      <span className="ml-[54px] flex-1 text-[38px] whitespace-nowrap">大家在炒什么？来问妙想！</span>
      <span className="h-9 w-[2px] bg-[#dc5c14]" />
      <button aria-label="展开" className="ml-4">
        <svg viewBox="0 0 34 30" className="w-[34px]" fill="none" stroke="#dc5c14" strokeWidth="3.500">
          <path d="M2 1L17 19L32 1" />
        </svg>
      </button>
    </div>
  );
}

/* ---------- bottom bar ---------- */

const action = "flex flex-[201] flex-col items-center gap-[20px] pt-[11px] text-[35px] leading-[38px]";

function BottomBar() {
  return (
    <footer className="flex h-[177px] shrink-0 border-t-2 border-[#d4d4d8] bg-[#f6f7fa] text-[#666]">
      <button className="flex flex-[276] flex-col items-center pt-2 text-[#d03432]">
        <svg viewBox="0 0 20 8" className="-ml-px w-5" fill="#707070">
          <path d="M10 0L20 8H0Z" />
        </svg>
        <span className="mt-2 text-[37px] leading-[50px]">4115.47</span>
        <span className="flex w-full justify-between pr-[13px] pl-[41px] text-[36px] leading-[48px]">
          <span className="text-[#666]">上证</span>
          <span>0.04%</span>
        </span>
      </button>
      <button className={`${action} !gap-[9px]`}>
        <svg viewBox="0 0 72 66" className="w-[72px]">
          <defs>
            <linearGradient id="card" x1="0" y1="1" x2="1" y2="0">
              <stop offset="0" stopColor="#ee2a26" />
              <stop offset="1" stopColor="#ff9a58" />
            </linearGradient>
          </defs>
          <path d="M17 8Q18 1 25 1H61Q71 1 71 12L67 49Q66 55 58 55L62 17Q62 9 54 9L17 8Z" fill="url(#card)" />
          <path d="M12 13H50Q58 13 58 21L54 56Q53 64 45 64H9Q23 56 31 44L39 48V28L18 32L23 38Q14 46 1 49L4 21Q5 13 12 13Z" fill="url(#card)" />
        </svg>
        <span className="bg-linear-to-r from-[#e62a26] to-[#ff9a55] bg-clip-text pr-1 text-[37px] font-black text-transparent italic">买板块</span>
      </button>
      <button className={action}>
        <svg viewBox="0 0 56 56" className="w-14" fill="none" stroke="#666" strokeWidth="3" strokeLinejoin="round">
          <path d="M40 2H9Q2 2 2 9V47Q2 54 9 54H46Q54 54 54 47V17" />
          <path d="M20 37L23 29L43 9L47 13L27 33Z" fill="#666" strokeWidth="1" />
          <path d="M46 6L50 2Q52 1 54 3Q55 5 54 7L50 10Z" fill="#666" strokeWidth="1" />
        </svg>
        发帖
      </button>
      <button className={action}>
        <svg viewBox="0 0 56 56" className="w-14" fill="none" stroke="#666" strokeWidth="3">
          <rect x="3" y="4" width="22" height="22" rx="3" />
          <rect x="3" y="31" width="22" height="22" rx="3" />
          <rect x="31" y="31" width="22" height="22" rx="3" />
          <path d="M40 4Q42 2 44 4L53 13Q55 15 53 17L44 26Q42 28 40 26L31 17Q29 15 31 13Z" />
        </svg>
        功能
      </button>
      <button className={`${action} text-[#dc5c14]`}>
        <svg viewBox="0 0 56 56" className="w-14" fill="none" stroke="#dc5c14" strokeWidth="3">
          <circle cx="28" cy="28" r="26" />
          <path d="M15 28H41M28 15V41" />
        </svg>
        加自选
      </button>
    </footer>
  );
}

export default function App() {
  return (
    <div className="flex h-screen flex-col bg-white font-['Noto_Sans','Noto_Sans_CJK_SC',sans-serif]">
      <main className="min-h-0 flex-1 overflow-hidden">
        <StatusBar />
        <Header />
        <Quote />
        <Tabs />
        <Charts />
        <Ask />
        <Banner />
      </main>
      <BottomBar />
    </div>
  );
}
